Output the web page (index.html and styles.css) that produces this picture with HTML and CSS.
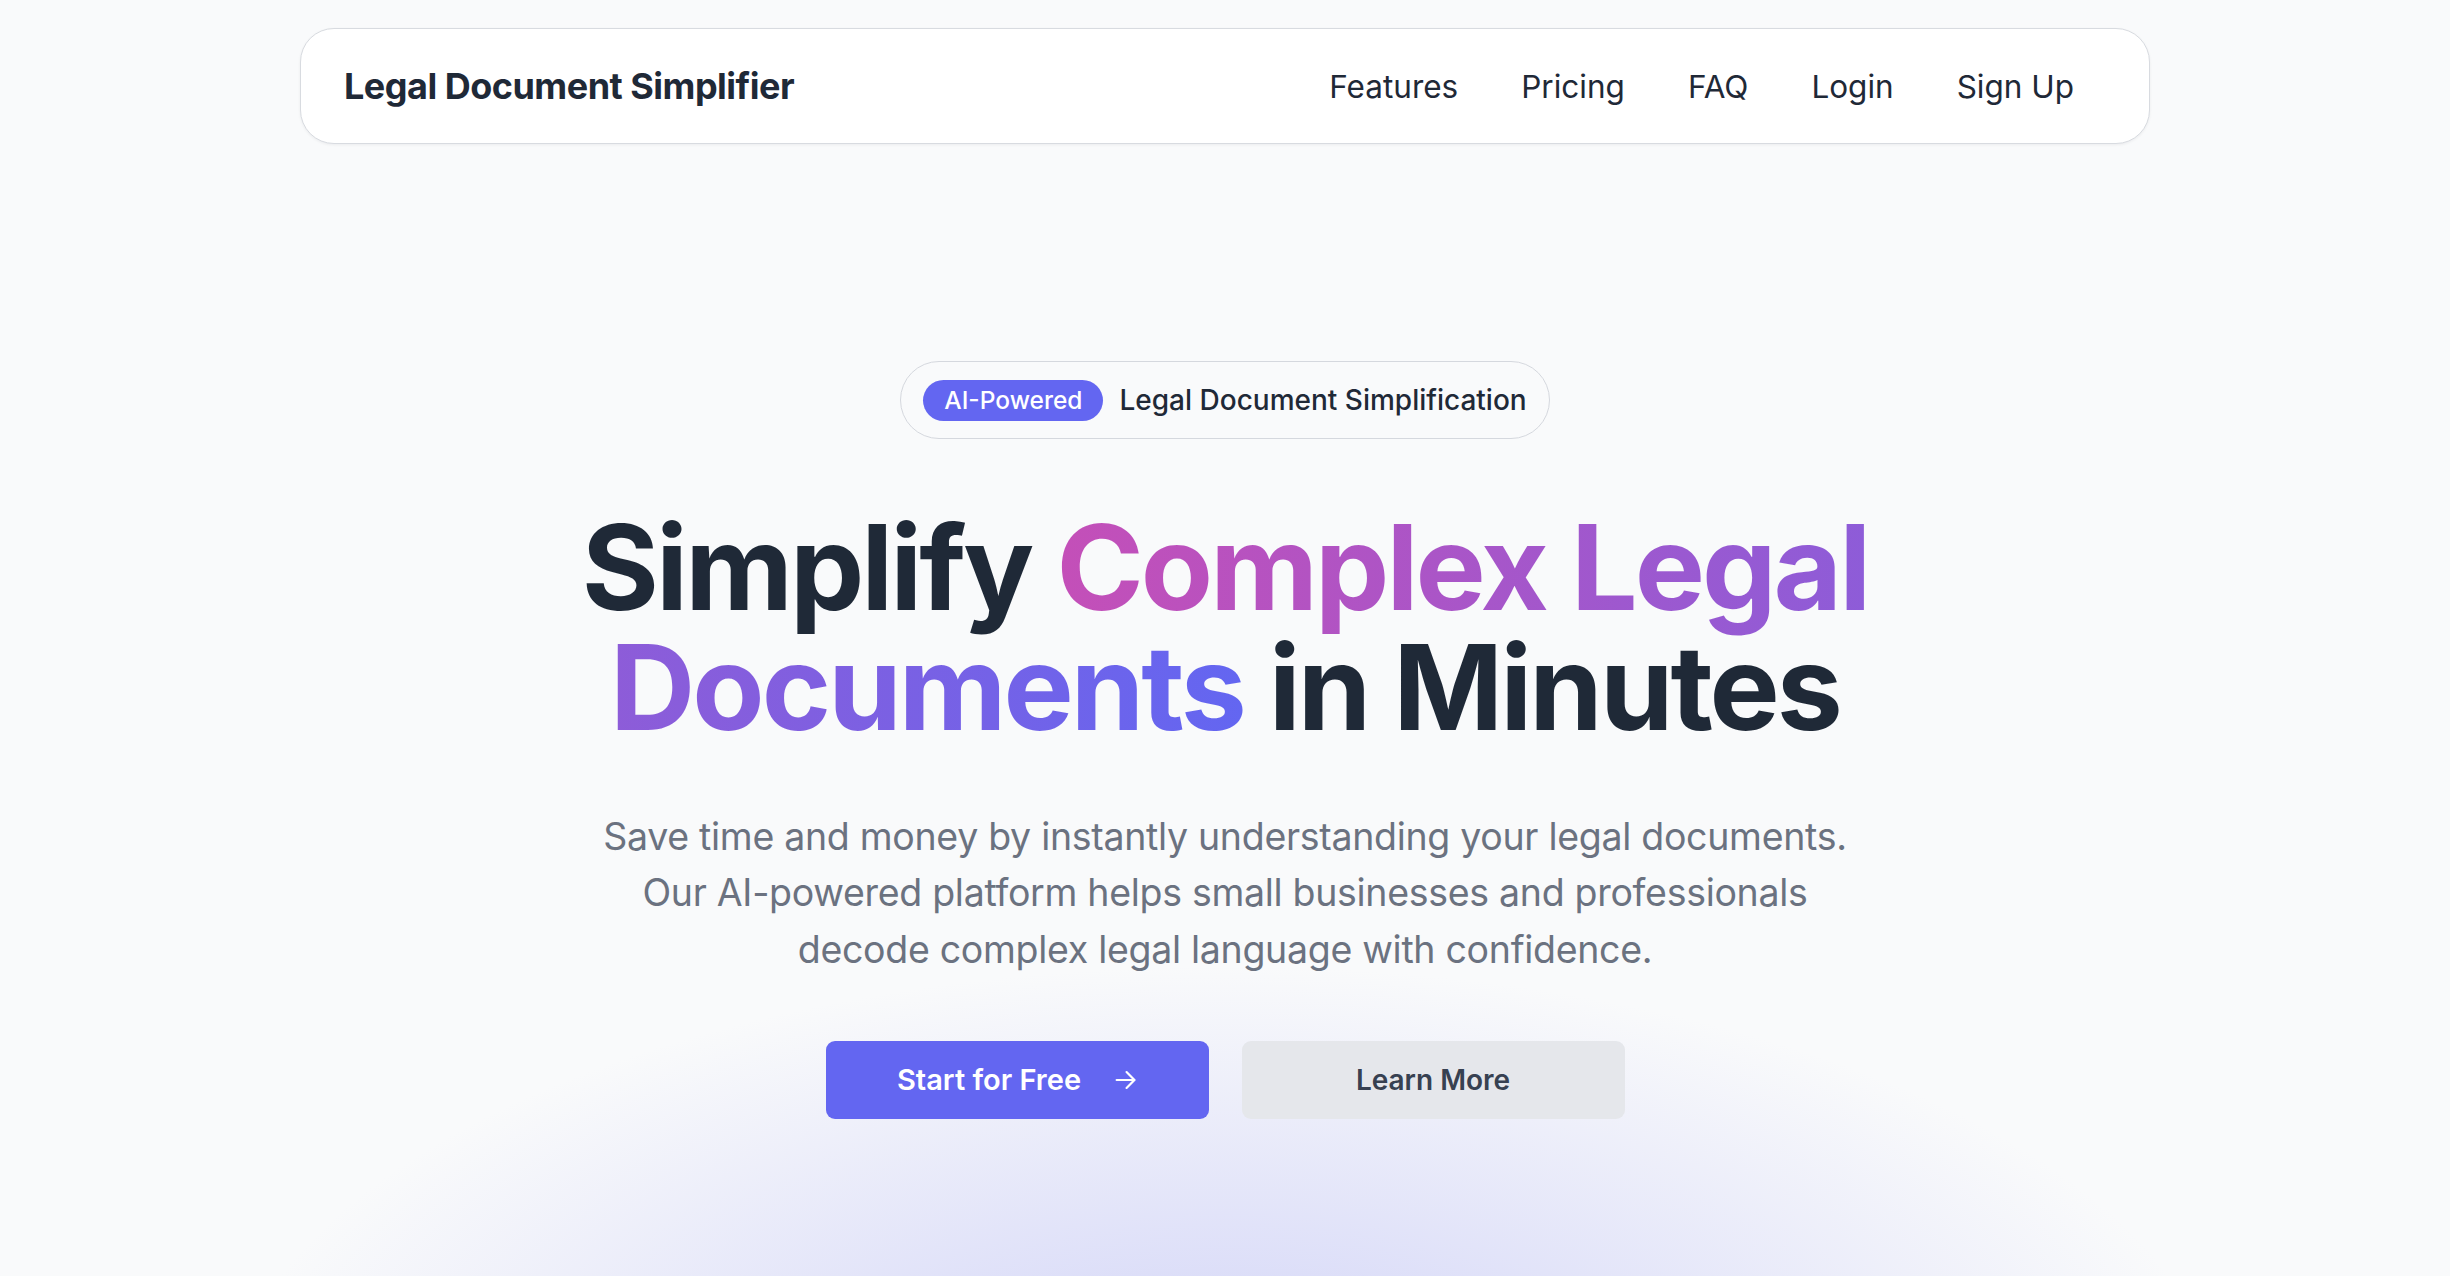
FILE: index.html
```html
<!DOCTYPE html>
<html lang="en">
<head>
<meta charset="utf-8">
<title>Legal Document Simplifier</title>
<link rel="stylesheet" href="styles.css">
</head>
<body>
<header class="site-header">
  <a class="brand" href="#">Legal Document Simplifier</a>
  <nav class="main-nav">
    <a href="#">Features</a>
    <a href="#">Pricing</a>
    <a href="#">FAQ</a>
    <a href="#">Login</a>
    <a href="#">Sign Up</a>
  </nav>
</header>
<main class="hero">
  <div class="badge">
    <span class="badge-pill">AI-Powered</span>
    <span class="badge-text">Legal Document Simplification</span>
  </div>
  <h1 class="hero-title">Simplify <span class="grad">Complex Legal Documents</span> in Minutes</h1>
  <p class="hero-lead">Save time and money by instantly understanding your legal documents. Our AI-powered platform helps small businesses and professionals decode complex legal language with confidence.</p>
  <div class="actions">
    <a class="btn btn-primary" href="#">Start for Free
      <svg class="arrow" viewBox="0 0 20 20" width="22" height="22" fill="none" stroke="currentColor" stroke-width="2" stroke-linecap="round" stroke-linejoin="round"><path d="M1.5 10h16"/><path d="M10.5 2.8l7.2 7.2-7.2 7.2"/></svg>
    </a>
    <a class="btn btn-secondary" href="#">Learn More</a>
  </div>
</main>
</body>
</html>
```
FILE: styles.css
```css
* { box-sizing: border-box; }
html, body { height: 100%; }
body {
  margin: 0;
  font-family: Inter, "Noto Sans", "Liberation Sans", sans-serif;
  color: #1f2937;
  background:
    radial-gradient(ellipse 1000px 460px at 50% calc(100% + 150px), #cfd1f6 0%, rgba(215,217,248,0.75) 40%, rgba(249,250,251,0) 100%),
    #f9fafb;
  overflow: hidden;
}
a { text-decoration: none; color: inherit; }

.site-header {
  width: 1850px;
  height: 116px;
  margin: 28px auto 0;
  padding: 0 75px 0 43px;
  display: flex;
  align-items: center;
  justify-content: space-between;
  background: #ffffff;
  border: 1.5px solid #d8dbe0;
  border-radius: 34px;
  box-shadow: 0 1px 3px rgba(17, 24, 39, 0.06);
}
.brand {
  font-size: 36px;
  font-weight: 700;
  letter-spacing: -0.014em;
  color: #1f2937;
}
.main-nav {
  display: flex;
  gap: 63px;
}
.main-nav a {
  font-size: 31.5px;
  font-weight: 400;
  color: #1f2937;
}

.hero {
  display: flex;
  flex-direction: column;
  align-items: center;
  text-align: center;
  padding-top: 217px;
}
.badge {
  display: flex;
  align-items: center;
  gap: 16px;
  height: 78px;
  padding: 0 22px;
  border: 1.5px solid #d5d8de;
  border-radius: 999px;
}
.badge-pill {
  display: flex;
  align-items: center;
  height: 41px;
  padding: 0 21px;
  border-radius: 999px;
  background: #6366f1;
  color: #ffffff;
  font-size: 24.5px;
  font-weight: 500;
}
.badge-text {
  font-size: 28px;
  font-weight: 500;
  color: #1f2937;
}
.hero-title {
  margin: 68px 0 0;
  font-size: 118px;
  line-height: 120px;
  font-weight: 700;
  letter-spacing: -0.025em;
  color: #1f2937;
  max-width: 1340px;
}
.grad {
  background: linear-gradient(90deg, #c44fb8 0%, #6366f1 100%);
  -webkit-background-clip: text;
  background-clip: text;
  color: transparent;
}
.hero-lead {
  margin: 62px 0 0;
  max-width: 1275px;
  font-size: 37.5px;
  line-height: 56.25px;
  letter-spacing: -0.008em;
  color: #6b7280;
}
.actions {
  display: flex;
  gap: 33px;
  margin-top: 63px;
}
.btn {
  display: flex;
  align-items: center;
  justify-content: center;
  width: 383px;
  height: 78px;
  border-radius: 9px;
  font-size: 28px;
  font-weight: 600;
}
.btn-primary {
  background: #6366f1;
  color: #ffffff;
  gap: 34px;
  font-size: 29px;
}
.btn-secondary {
  background: #e5e7eb;
  color: #374151;
}
.arrow { display: block; }
```
